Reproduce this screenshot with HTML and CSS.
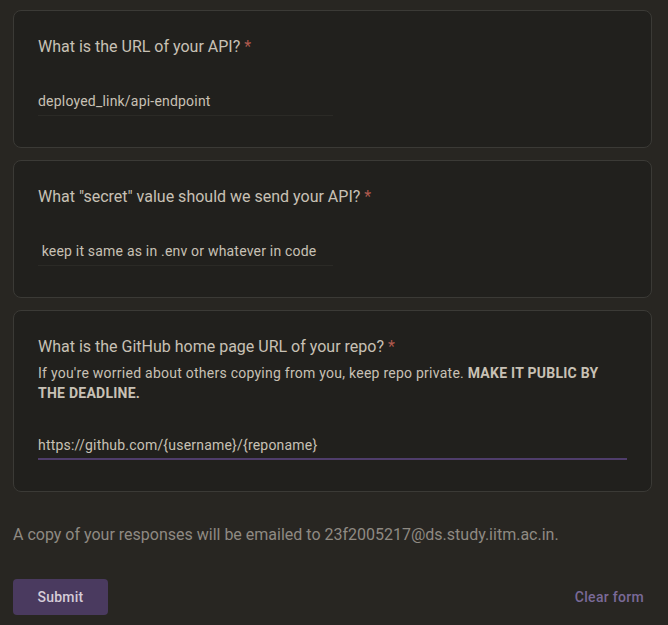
FILE: index.html
```html
<!DOCTYPE html>
<html>
<head>
<meta charset="utf-8">
<link rel="stylesheet" href="styles.css">
</head>
<body>
<div class="form">
  <div class="card">
    <div class="q-title">What is the URL of your API? <span class="req">*</span></div>
    <div class="answer half">deployed_link/api-endpoint</div>
  </div>
  <div class="card">
    <div class="q-title">What "secret" value should we send your API? <span class="req">*</span></div>
    <div class="answer half pre"> keep it same as in .env or whatever in code</div>
  </div>
  <div class="card">
    <div class="q-title">What is the GitHub home page URL of your repo? <span class="req">*</span></div>
    <div class="q-desc">If you're worried about others copying from you, keep repo private. <b>MAKE IT PUBLIC BY THE DEADLINE.</b></div>
    <div class="answer full focused">https://github.com/{username}/{reponame}</div>
  </div>
  <div class="email-note">A copy of your responses will be emailed to 23f2005217@ds.study.iitm.ac.in.</div>
  <div class="actions">
    <button class="submit">Submit</button>
    <span class="clear">Clear form</span>
  </div>
</div>
</body>
</html>
```
FILE: styles.css
```css
html, body {
  margin: 0;
  padding: 0;
  background: #282622;
}
body {
  font-family: Roboto, "Noto Sans", sans-serif;
  color: #c8c1b5;
}
.form {
  padding: 10px 16px 0 13px;
  display: flex;
  flex-direction: column;
}
.card {
  background: #21201d;
  border: 1px solid #3b3a36;
  border-radius: 8px;
  padding: 24px;
  margin-bottom: 12px;
}
.q-title {
  font-size: 16px;
  line-height: 24px;
  color: #c8c1b5;
}
.req {
  color: #b0594d;
}
.q-desc {
  font-size: 14px;
  line-height: 20px;
  margin-top: 4px;
  letter-spacing: 0.25px;
  color: #c8c1b5;
}
.q-desc b {
  font-weight: 700;
}
.answer {
  font-size: 14px;
  line-height: 20px;
  margin-top: 30px;
  margin-bottom: 7px;
  padding: 2px 0 4px 0;
  border-bottom: 1px solid #2b2a26;
  color: #c8c1b5;
  letter-spacing: 0.2px;
}
.pre {
  white-space: pre;
}
.half {
  width: 50%;
}
.full {
  width: 100%;
}
.focused {
  padding-bottom: 3px;
  border-bottom: 2px solid #4f3d6b;
}
.email-note {
  margin-top: 19px;
  font-size: 16px;
  line-height: 24px;
  color: #8f8a82;
}
.actions {
  margin-top: 32px;
  display: flex;
  justify-content: space-between;
  align-items: center;
}
.submit {
  background: #4a3a5f;
  color: #d5ccd8;
  border: none;
  border-radius: 4px;
  width: 95px;
  height: 36px;
  font-family: Roboto, "Noto Sans", sans-serif;
  font-size: 14px;
  font-weight: 500;
  letter-spacing: 0.25px;
}
.clear {
  color: #7a6a98;
  font-size: 14px;
  font-weight: 500;
  letter-spacing: 0.3px;
  margin-right: 8px;
}
```
